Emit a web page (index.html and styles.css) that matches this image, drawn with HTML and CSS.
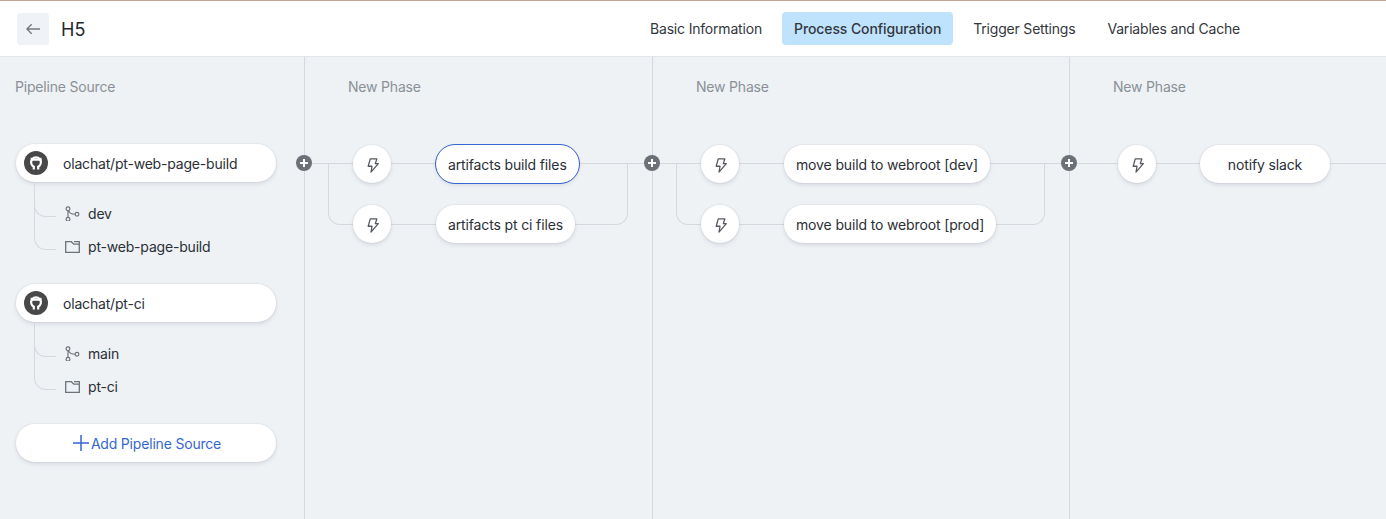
FILE: index.html
```html
<!DOCTYPE html>
<html lang="en">
<head>
<meta charset="utf-8">
<title>H5</title>
<link rel="stylesheet" href="styles.css">
</head>
<body>
<svg class="sprites" aria-hidden="true">
  <symbol id="gh" viewBox="0 0 24 24">
    <circle cx="12" cy="12" r="12" fill="#484848"/>
    <path fill="#fff" d="M6.6 6.4l2.6 1.2h5.6l2.6-1.2.4 3.4h-11z"/>
    <path fill="none" stroke="#fff" stroke-width="2.2" d="M9.8 18.6v-2.9a4.9 4.9 0 1 1 4.4 0v2.9"/>
  </symbol>
  <symbol id="branch" viewBox="0 0 15 15"><g fill="none" stroke="currentColor" stroke-width="1.15"><circle cx="3" cy="2.8" r="1.9"/><circle cx="3" cy="13.2" r="1.9"/><circle cx="12" cy="8.2" r="1.9"/><path d="M3 4.7v6.6M3.6 4.6c.8 2.5 2.8 3.6 6.5 3.6"/></g></symbol>
  <symbol id="folder" viewBox="0 0 15 15"><path fill="none" stroke="currentColor" stroke-width="1.3" d="M.7 2.7h5.6l2.5 2.5h5.5v8.1H.7zM9 2.7h5.3v2.5"/></symbol>
  <symbol id="bolt" viewBox="0 0 16 16"><path fill="none" stroke="currentColor" stroke-width="1.35" stroke-linejoin="round" d="M5.6 1h7L11 6h3.2L6.4 15l1.1-6.2H3.4z"/></symbol>
</svg>

<header class="topbar">
  <div class="topbar-left">
    <button class="back" type="button" aria-label="Back">
      <svg class="back-icon" viewBox="0 0 16 16"><path d="M16 8H1M6.5 2.5 1 8l5.5 5.5"/></svg>
    </button>
    <h1 class="page-title">H5</h1>
  </div>
  <nav class="tabs">
    <a class="tab">Basic Information</a>
    <a class="tab tab-active">Process Configuration</a>
    <a class="tab">Trigger Settings</a>
    <a class="tab">Variables and Cache</a>
  </nav>
</header>

<main class="canvas">
  <section class="source-col">
    <h2 class="col-title source-title">Pipeline Source</h2>
    <div class="source-card"><svg class="gh"><use href="#gh"/></svg><span>olachat/pt-web-page-build</span></div>
    <ul class="source-children">
      <li class="child"><svg class="child-icon"><use href="#branch"/></svg>dev</li>
      <li class="child"><svg class="child-icon"><use href="#folder"/></svg>pt-web-page-build</li>
    </ul>
    <div class="source-card"><svg class="gh"><use href="#gh"/></svg><span>olachat/pt-ci</span></div>
    <ul class="source-children">
      <li class="child"><svg class="child-icon"><use href="#branch"/></svg>main</li>
      <li class="child"><svg class="child-icon"><use href="#folder"/></svg>pt-ci</li>
    </ul>
    <button class="add-source" type="button">
      <svg class="add-icon" viewBox="0 0 16 16"><path d="M8 0v16M0 8h16"/></svg>Add Pipeline Source
    </button>
    <span class="add-stage"></span>
  </section>

  <section class="phase phase-one">
    <h2 class="col-title">New Phase</h2>
    <div class="job-row">
      <span class="trigger"><svg class="bolt"><use href="#bolt"/></svg></span>
      <span class="job job-selected">artifacts build files</span>
    </div>
    <div class="job-row job-branch">
      <span class="trigger"><svg class="bolt"><use href="#bolt"/></svg></span>
      <span class="job">artifacts pt ci files</span>
    </div>
    <span class="add-stage"></span>
  </section>

  <section class="phase phase-two">
    <h2 class="col-title">New Phase</h2>
    <div class="job-row">
      <span class="trigger"><svg class="bolt"><use href="#bolt"/></svg></span>
      <span class="job">move build to webroot [dev]</span>
    </div>
    <div class="job-row job-branch">
      <span class="trigger"><svg class="bolt"><use href="#bolt"/></svg></span>
      <span class="job">move build to webroot [prod]</span>
    </div>
    <span class="add-stage"></span>
  </section>

  <section class="phase phase-three">
    <h2 class="col-title">New Phase</h2>
    <div class="job-row">
      <span class="trigger"><svg class="bolt"><use href="#bolt"/></svg></span>
      <span class="job job-wide">notify slack</span>
    </div>
  </section>
</main>
</body>
</html>
```

FILE: styles.css
```css
* { box-sizing: border-box; }

html, body {
  margin: 0;
  height: 519px;
  overflow: hidden;
}

body {
  display: flex;
  flex-direction: column;
  background: #eef2f5;
  color: #2b2f36;
  font: 14px/20px Inter, "Noto Sans", sans-serif;
  letter-spacing: -0.19px;
  border-top: 1px solid #c4a294;
}

.sprites { display: none; }

.topbar {
  flex: 0 0 56px;
  display: flex;
  align-items: center;
  justify-content: space-between;
  padding: 0 134px 0 17px;
  background: #fff;
  border-bottom: 1px solid #e2e6eb;
}

.topbar-left {
  display: flex;
  align-items: center;
  gap: 12px;
}

.back {
  width: 32px;
  height: 32px;
  padding: 0;
  display: flex;
  align-items: center;
  justify-content: center;
  border: 0;
  border-radius: 4px;
  background: #eff2f6;
}

.back-icon {
  width: 14px;
  height: 14px;
  fill: none;
  stroke: #75797f;
  stroke-width: 1.6;
}

.page-title {
  margin: 2px 0 0;
  font-size: 18px;
  line-height: 24px;
  font-weight: 400;
  letter-spacing: 0;
  color: #24272c;
}

.tabs {
  display: flex;
  gap: 8px;
}

.tab {
  padding: 7px 12px 6px;
  border-radius: 4px;
  color: #33373d;
}

.tab-active {
  background: #bfe3fd;
  font-weight: 500;
  letter-spacing: -0.1px;
}

.canvas {
  flex: 1;
  display: flex;
  min-height: 0;
}

.col-title {
  margin: 0 0 48px;
  font-size: 14px;
  line-height: 20px;
  font-weight: 400;
  color: #8b9097;
}

.source-col {
  position: relative;
  flex: 0 0 305px;
  padding: 20px 0 0 16px;
  border-right: 1px solid #d5d9df;
}

.source-title {
  margin-left: -1px;
  margin-bottom: 47px;
}

.source-card {
  width: 260px;
  height: 38px;
  display: flex;
  align-items: center;
  gap: 15px;
  padding-left: 8px;
  background: #fff;
  border-radius: 19px;
  box-shadow: 0 2px 4px rgba(40, 50, 70, .12), 0 0 0 1px rgba(40, 50, 70, .04);
}

.source-card span {
  padding-top: 2px;
}

.gh {
  flex: 0 0 24px;
  width: 24px;
  height: 24px;
}

.source-children {
  margin: 0;
  padding: 15px 0 21px;
  list-style: none;
}

.child {
  position: relative;
  height: 33px;
  display: flex;
  align-items: center;
  gap: 8px;
  padding-left: 49px;
}

.child::before {
  content: "";
  position: absolute;
  left: 18px;
  top: -15px;
  width: 21px;
  height: 34px;
  border-left: 1px solid #d5d9df;
  border-bottom: 1px solid #d5d9df;
  border-bottom-left-radius: 12px;
}

.child + .child::before {
  top: -48px;
  height: 67px;
}

.child-icon {
  width: 15px;
  height: 15px;
  color: #6e7379;
}

.add-source {
  width: 260px;
  height: 38px;
  display: flex;
  align-items: center;
  justify-content: center;
  gap: 2px;
  padding: 2px 0 0 2px;
  border: 0;
  border-radius: 19px;
  background: #fff;
  color: #3567d0;
  font: inherit;
  letter-spacing: inherit;
  box-shadow: 0 2px 4px rgba(40, 50, 70, .12), 0 0 0 1px rgba(40, 50, 70, .04);
}

.add-icon {
  width: 16px;
  height: 16px;
  margin-top: -2px;
  fill: none;
  stroke: #3567d0;
  stroke-width: 1.5;
}

.phase {
  position: relative;
  padding: 20px 72px 0 48px;
  border-right: 1px solid #d5d9df;
}

.phase-one { flex: 0 0 348px; }
.phase-two { flex: 0 0 417px; }
.phase-three { flex: 1; border-right: 0; }

.phase .col-title {
  margin-left: -5px;
}

.job-row {
  position: relative;
  display: flex;
  align-items: center;
  gap: 45px;
  height: 38px;
  margin-bottom: 22px;
}

.job-row::before {
  content: "";
  position: absolute;
  left: -48px;
  right: -72px;
  top: 18px;
  height: 1px;
  background: #d5d9df;
}

.job-branch::before {
  left: -25px;
  right: -48px;
  top: -42px;
  height: 61px;
  background: none;
  border: 1px solid #d5d9df;
  border-top: 0;
  border-radius: 0 0 12px 12px;
}

.trigger,
.job {
  position: relative;
  z-index: 1;
  height: 38px;
  display: flex;
  align-items: center;
  justify-content: center;
  background: #fff;
  box-shadow: 0 2px 4px rgba(40, 50, 70, .12), 0 0 0 1px rgba(40, 50, 70, .04);
}

.trigger {
  flex: 0 0 38px;
  border-radius: 50%;
}

.bolt {
  width: 15px;
  height: 15px;
  margin-top: 3px;
  color: #55595f;
}

.job {
  padding: 2px 12px 0;
  border-radius: 19px;
  white-space: nowrap;
  letter-spacing: -0.14px;
}

.job-selected {
  outline: 1px solid #3567d0;
}

.job-wide {
  min-width: 130px;
  margin-left: -1px;
}

.add-stage {
  position: absolute;
  z-index: 2;
  top: 98px;
  right: -8px;
  width: 16px;
  height: 16px;
  border-radius: 50%;
  background:
    linear-gradient(#fff, #fff) center / 8px 2px no-repeat,
    linear-gradient(#fff, #fff) center / 2px 8px no-repeat,
    #6c7077;
}
```
